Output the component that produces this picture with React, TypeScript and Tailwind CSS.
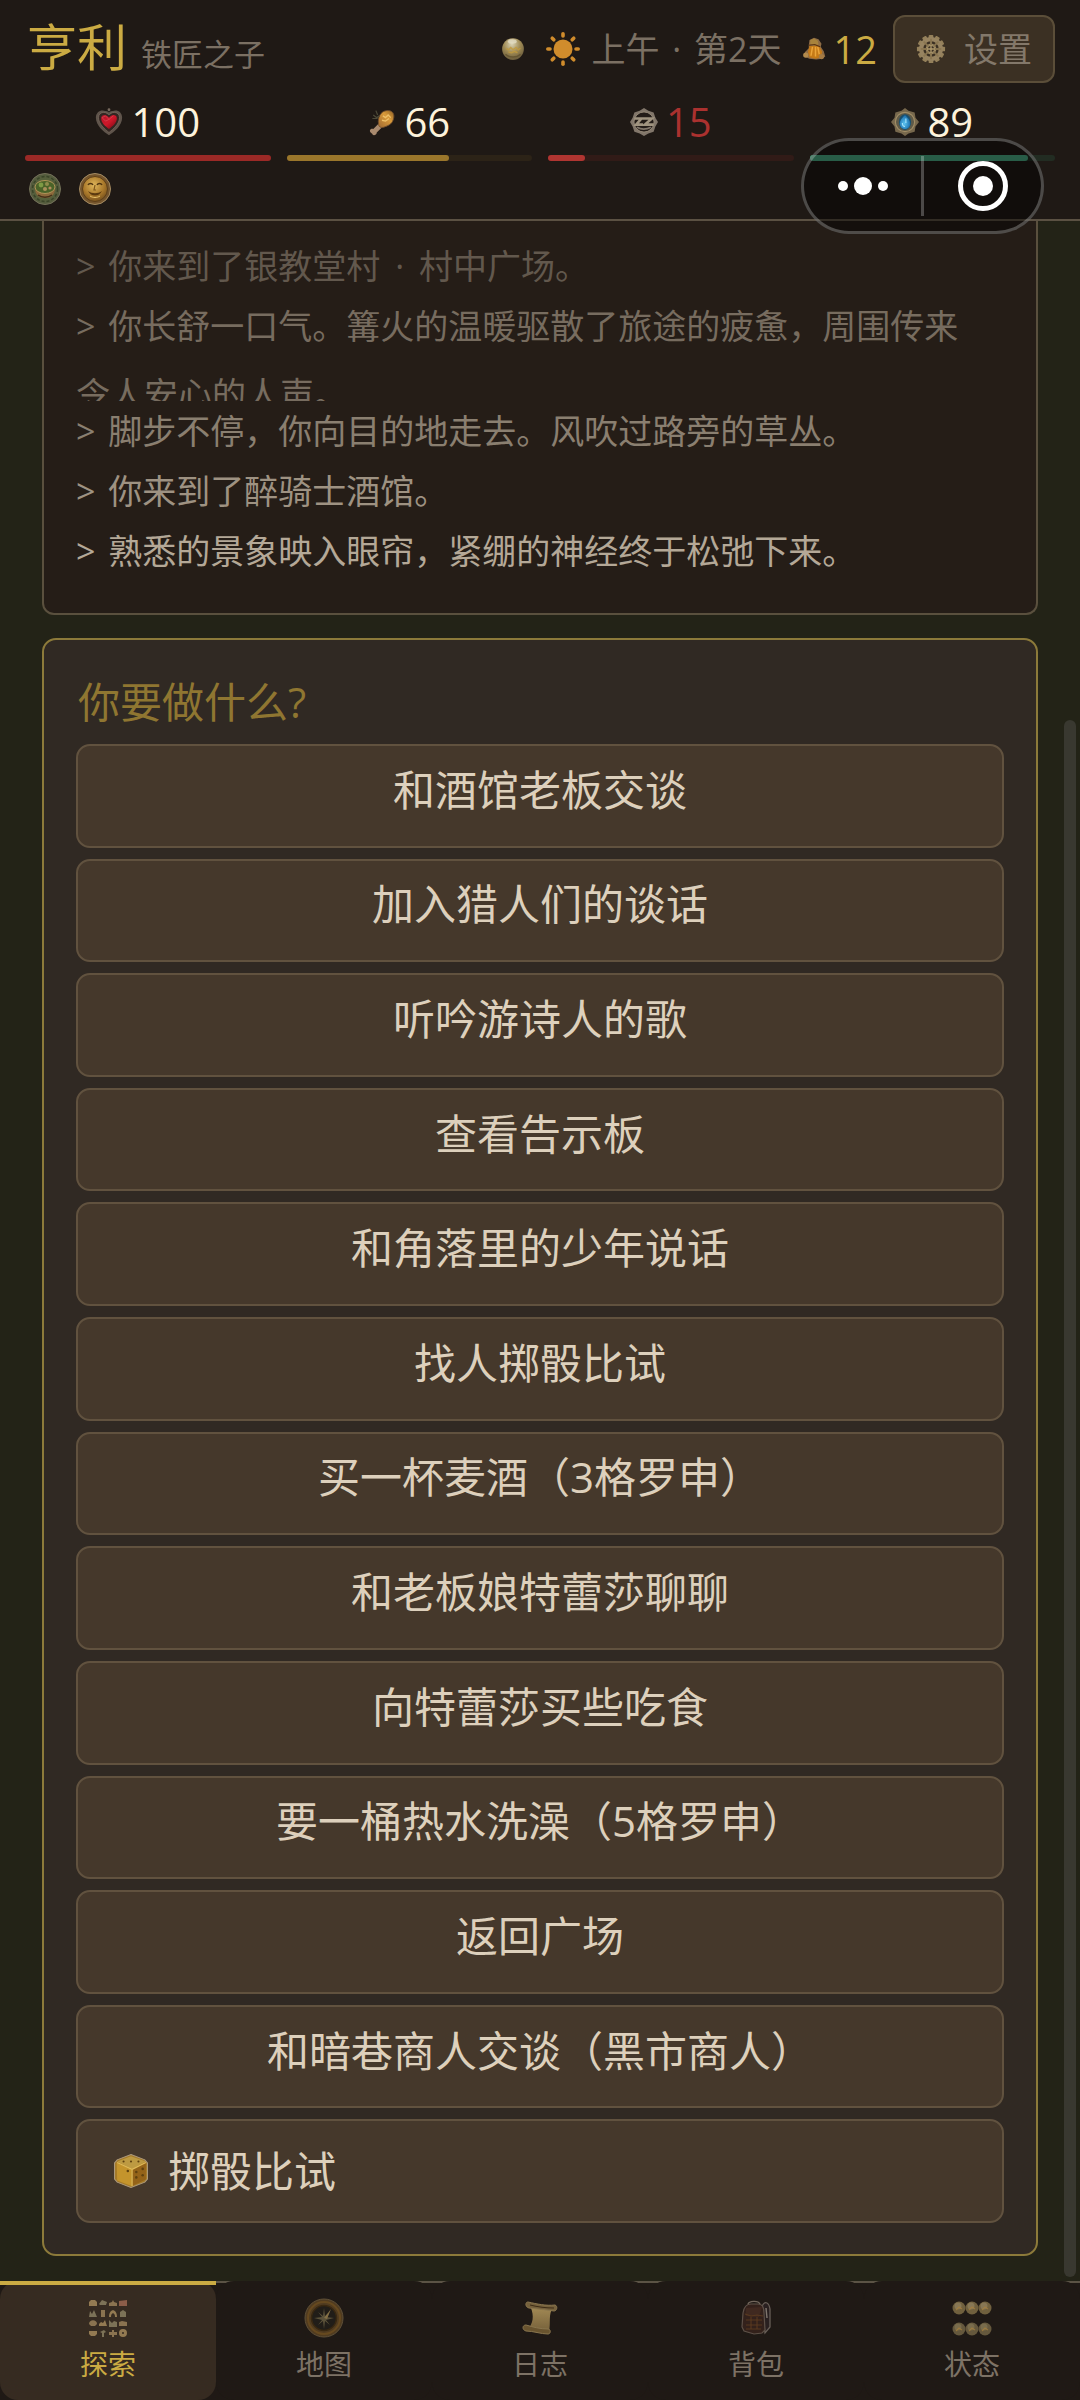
import type { ReactNode } from 'react';

type IconProps = { className?: string };

function Svg({ className = '', box = 32, children }: { className?: string; box?: number; children: ReactNode }) {
  return (
    <svg aria-hidden="true" viewBox={`0 0 ${box} ${box}`} className={`shrink-0 ${className}`}>
      {children}
    </svg>
  );
}

function Gradients() {
  return (
    <svg aria-hidden="true" className="absolute size-0">
      <defs>
        <radialGradient id="pearl" cx="45%" cy="28%" r="75%">
          <stop offset="0" stopColor="#d9d2b4" />
          <stop offset="0.5" stopColor="#a08b55" />
          <stop offset="1" stopColor="#66583a" />
        </radialGradient>
        <radialGradient id="coin" cx="45%" cy="35%" r="70%">
          <stop offset="0" stopColor="#dfb65a" />
          <stop offset="0.6" stopColor="#a9782a" />
          <stop offset="1" stopColor="#6f4b1c" />
        </radialGradient>
        <radialGradient id="moss" cx="50%" cy="50%" r="60%">
          <stop offset="0" stopColor="#5a6a35" />
          <stop offset="1" stopColor="#525740" />
        </radialGradient>
        <radialGradient id="water" cx="45%" cy="60%" r="60%">
          <stop offset="0" stopColor="#5cc4f2" />
          <stop offset="1" stopColor="#1769a8" />
        </radialGradient>
        <linearGradient id="ruby" x1="0" y1="0" x2="1" y2="1">
          <stop offset="0" stopColor="#b3152a" />
          <stop offset="0.5" stopColor="#d0182a" />
          <stop offset="1" stopColor="#6d0812" />
        </linearGradient>
        <linearGradient id="meat" x1="1" y1="0" x2="0" y2="1">
          <stop offset="0" stopColor="#8c5f24" />
          <stop offset="0.4" stopColor="#d99a3a" />
          <stop offset="1" stopColor="#a06a32" />
        </linearGradient>
        <linearGradient id="paper" x1="0" y1="0" x2="0" y2="1">
          <stop offset="0" stopColor="#a88f58" />
          <stop offset="1" stopColor="#75603a" />
        </linearGradient>
      </defs>
    </svg>
  );
}

const Orb = ({ className }: IconProps) => (
  <Svg className={className}>
    <circle cx="16" cy="16" r="14.5" fill="url(#pearl)" />
    <path d="M7 15l3 2 3-3 3 3 4-3 3 3 3-2M10 20l4 1 4-2 4 2" stroke="#c29a3c" strokeWidth="2" fill="none" opacity="0.8" />
    <path d="M6 23c5 5 15 5 20 0" stroke="#554627" strokeWidth="2" fill="none" opacity="0.6" />
    <ellipse cx="15" cy="6" rx="6" ry="3" fill="#e8e2cc" opacity="0.7" />
  </Svg>
);

const Sun = ({ className }: IconProps) => (
  <Svg className={className} box={36}>
    <circle cx="18" cy="18" r="9.5" fill="#d08c2c" />
    {[0, 45, 90, 135, 180, 225, 270, 315].map((a) => (
      <line key={a} x1="18" y1="2.8" x2="18" y2="5" stroke="#d08c2c" strokeWidth="3.6" strokeLinecap="round" transform={`rotate(${a} 18 18)`} />
    ))}
  </Svg>
);

const Purse = ({ className }: IconProps) => (
  <Svg className={className}>
    <path d="M10 4l6-3 6 2 4 6-1 4 4 6 2 7-4 3-8 1-9-1-7-3 1-6 5-5 0-4z" fill="#8d6b45" />
    <path d="M10 12h13l4 8-2 7-7 2-8-2-2-7z" fill="#c57a17" />
    <path d="M14 13l-2 12M18 13v13M21 13l2 10" stroke="#eba53a" strokeWidth="2" />
    <path d="M11 4l5-2 5 3 1 5-6 2-5-3z" fill="#a8833c" />
    <path d="M9 11l8-1 7 3" stroke="#5b3310" strokeWidth="1.6" fill="none" />
    <circle cx="5" cy="24" r="3.5" fill="#b38b4d" />
    <circle cx="26" cy="26" r="3.5" fill="#a57b44" />
  </Svg>
);

const Gear = ({ className }: IconProps) => (
  <Svg className={className}>
    {Array.from({ length: 12 }, (_, i) => (
      <rect key={i} x="13.5" y="1" width="5" height="6" rx="1" fill="#94805a" transform={`rotate(${i * 30} 16 16)`} />
    ))}
    <circle cx="16" cy="16" r="10.5" fill="none" stroke="#978360" strokeWidth="4.5" />
    <circle cx="16" cy="16" r="4.500" fill="none" stroke="#9c8862" strokeWidth="2.500" />
    {Array.from({ length: 8 }, (_, i) => (
      <line key={i} x1="16" y1="5" x2="16" y2="12" stroke="#8a7650" strokeWidth="2" transform={`rotate(${i * 45} 16 16)`} />
    ))}
    <path d="M16 12v8M12 16h8" stroke="#b09a6e" strokeWidth="1.4" />
  </Svg>
);

const Heart = ({ className }: IconProps) => (
  <Svg className={className}>
    <path d="M16 31C10 27 1 20 1 11c0-6 5-9 9-8 3 0 5 1 6 2 1-1 3-2 6-2 4-1 9 2 9 8 0 9-9 16-15 20z" fill="#5f544b" />
    <path d="M16 28C11 24 4 18 4 11c0-4 3-6 6-6s5 2 6 3c1-1 3-3 6-3s6 2 6 6c0 7-7 13-12 17z" fill="#332622" stroke="#7d6e62" strokeWidth="0.8" />
    <path d="M16 24C12 21 7 17 7 12c0-3 2-4 4-4s4 2 5 3c1-1 3-3 5-3s4 1 4 4c0 5-5 9-9 12z" fill="url(#ruby)" />
    <path d="M8 11l4-2 4 4-4 2zM16 13l5-4" stroke="#e2505a" strokeWidth="0.7" fill="none" />
    <circle cx="16" cy="2" r="1.6" fill="#776a5e" />
  </Svg>
);

const Drumstick = ({ className }: IconProps) => (
  <Svg className={className}>
    <path d="M14 16L6 24c-3-1-5 2-3 4 1 1 2 1 2 2 1 2 5 1 5-2l9-9z" fill="#a98a6e" />
    <path d="M12 18C11 11 14 4 21 3c7-1 10 4 8 10-2 6-6 7-11 9-4 1-6-1-6-4z" fill="url(#meat)" stroke="#6e4c2c" strokeWidth="1" />
    <path d="M17 9l3 2 3-3 3 3M16 14l4 1 4-3" stroke="#efc068" strokeWidth="1.5" fill="none" />
    <path d="M6 8l4 3 3-2M9 3l2 5M5 12l6 0" stroke="#4d4a38" strokeWidth="1.4" fill="none" />
  </Svg>
);

const Fatigue = ({ className }: IconProps) => (
  <Svg className={className}>
    <path d="M16 0l5 3 6 2 2 6 3 5-3 5-2 6-6 2-5 3-5-3-6-2-2-6-3-5 3-5 2-6 6-2z" fill="#81766a" />
    <circle cx="16" cy="16" r="11.500" fill="#231c18" stroke="#988b79" strokeWidth="1" />
    <path d="M5 12h8l-6 7h8M14 12h11l-8 7h10" stroke="#a09480" strokeWidth="3" fill="none" />
    <path d="M8 22c5 3 10 3 16 0" stroke="#81766a" strokeWidth="2" fill="none" />
  </Svg>
);

const WaterGem = ({ className }: IconProps) => (
  <Svg className={className}>
    <path d="M16 0l4 3 7 2 1 6 4 5-4 5-1 6-7 2-4 3-4-3-7-2-1-6-4-5 4-5 1-6 7-2z" fill="#77684d" />
    <circle cx="16" cy="16" r="11" fill="#5f5a48" stroke="#a18d66" strokeWidth="1.3" />
    <ellipse cx="16" cy="16" rx="7" ry="9" fill="#1a506e" />
    <path d="M16 8c3 3 6 6 6 10a6 6 0 0 1-12 0c0-4 3-7 6-10z" fill="url(#water)" />
    <path d="M13 17c0 3 1 4 3 4M17 12v5" stroke="#a2e2fa" strokeWidth="1.3" fill="none" />
  </Svg>
);

const FullBadge = ({ className }: IconProps) => (
  <Svg className={className}>
    <circle cx="16" cy="16" r="15.5" fill="url(#moss)" stroke="#747159" />
    <circle cx="16" cy="16" r="12.5" fill="none" stroke="#3a4428" strokeWidth="1.5" strokeDasharray="3 2" />
    <path d="M6 15c0 7 4 10 10 10s10-3 10-10z" fill="#8c693b" />
    <ellipse cx="16" cy="14" rx="10" ry="6.5" fill="#4a6328" stroke="#b09458" strokeWidth="1" />
    <circle cx="12" cy="12" r="2.4" fill="#7d9a45" />
    <circle cx="18" cy="11" r="2" fill="#8f8d4c" />
    <circle cx="16" cy="16" r="2" fill="#a8905a" />
    <circle cx="21" cy="15" r="1.6" fill="#b08d5c" />
    <path d="M9 22c4 3 10 3 14 0" stroke="#442f18" strokeWidth="1.5" fill="none" />
  </Svg>
);

const HappyBadge = ({ className }: IconProps) => (
  <Svg className={className}>
    <circle cx="16" cy="16" r="15.5" fill="#75552d" stroke="#a58c63" />
    <circle cx="16" cy="16" r="12.5" fill="url(#coin)" stroke="#5d3f18" />
    <path d="M9 12c1-2 4-2 5 0M18 12c1-2 4-2 5 0" stroke="#51350f" strokeWidth="1.5" fill="none" />
    <path d="M16 12l-1 5h2" stroke="#80581d" strokeWidth="1.2" fill="none" />
    <path d="M9 18c3 6 11 6 14 0-4 3-10 3-14 0z" fill="#5b3a10" />
    <path d="M11 23c3 2 7 2 10 0" stroke="#e6bf68" strokeWidth="1" fill="none" />
  </Svg>
);

const Dice = ({ className }: IconProps) => (
  <Svg className={className}>
    <path d="M16 .5l13 5 2.500 3v15l-2.500 3-13 5-13-5-2.500-3v-15l2.500-3z" fill="#a57a27" stroke="#ab987a" strokeWidth="1" />
    <path d="M16 2L3 7l14 7 13-7z" fill="#bd9a42" />
    <path d="M2.500 8l14 6.500v15.500L3 25z" fill="#c4942c" />
    <path d="M17 14.500L30 8v16l-13 6z" fill="#946319" />
    <path d="M3 8l14 6.500V30M17 14.500L30 8" stroke="#dfba58" strokeWidth="1.2" fill="none" />
    <g fill="#5f410f">
      <circle cx="16" cy="7" r="1" />
      <circle cx="9" cy="7" r="1" />
      <circle cx="23" cy="7" r="1" />
      <circle cx="13" cy="16" r="1.200" />
      <circle cx="21" cy="17" r="1.200" />
      <circle cx="21" cy="22" r="1.200" />
      <circle cx="27" cy="14" r="1.200" />
      <circle cx="27" cy="20" r="1.200" />
    </g>
  </Svg>
);

const exploreShapes = [
  'M1 7V3l2-2h4l2 2v4z', 'M1 5l3-4 5 2-1 3H2z', 'M1 7V4l3-1 1-2 1 2 3 1v3z', 'M1 2l8-1v6H1z',
  'M1 8l1-6 2 3 2-4 3 7z', 'M3 1h4v7H3z', 'M1 8c0-9 8-9 8 0H7c0-5-4-5-4 0z', 'M2 8V3l3-2 3 2v5z',
  'M1 5c0-5 8-5 8 0L7 7H3z', 'M1 7V5l2-2 2 1 2-3 2 6z', 'M1 1l3 3 2-2 3 1v5H1z', 'M1 7V3l3-1 5 1v4z',
  'M1 2h8v3L7 7H3L1 5z', 'M4 8V4L2 3l4-2 2 2-2 1v4z', 'M1 3h3V1h2v2h3v3H6v2H4V6H1z', 'M5 0a4 4 0 1 1 0 8 4 4 0 0 1 0-8zm0 3a1 1 0 1 0 0 2 1 1 0 0 0 0-2z',
];
const exploreTones = ['#937a52', '#7c7257', '#8a7350', '#8b5d49'];

const Explore = ({ className }: IconProps) => (
  <Svg className={className} box={40}>
    {exploreShapes.map((d, i) => (
      <path key={i} d={d} fill={i < 4 ? exploreTones[i] : exploreTones[i % 3]} fillRule="evenodd" transform={`translate(${(i % 4) * 10} ${Math.floor(i / 4) * 10 + 1})`} />
    ))}
  </Svg>
);

const Compass = ({ className }: IconProps) => (
  <Svg className={className} box={40}>
    <circle cx="20" cy="20" r="19" fill="#503b20" stroke="#5f5038" />
    <circle cx="20" cy="20" r="16" fill="none" stroke="#66491f" strokeWidth="2" />
    <circle cx="20" cy="20" r="12.500" fill="#211d18" stroke="#392811" strokeWidth="1.500" />
    <path d="M20 10l1 8 5-4-4 5 8 1-8 2 4 5-5-4-1 8-1-8-5 4 4-5-8-2 8-1-4-5 5 4z" fill="#5b523a" />
    <path d="M20 20l7-9-4 10z" fill="#857046" />
  </Svg>
);

const Scroll = ({ className }: IconProps) => (
  <Svg className={className} box={40}>
    <path d="M9 6c8 2 15 1 24 3-5 8-2 15-4 25-6-1-14-1-20-4 5-7 5-15 0-24z" fill="url(#paper)" />
    <path d="M8 4c-3 0-3 5 1 6 9 1 18 2 25 3 3 0 4-5 1-6-9 1-18-1-27-3z" fill="#75613c" stroke="#8a764e" strokeWidth="1" />
    <path d="M6 27c-4 0-4 5 0 6 7 0 15 3 22 3 3 0 3-5 0-5-8 0-15-2-22-4z" fill="#69542f" stroke="#8a764e" strokeWidth="1" />
    <path d="M10 7c8 2 16 3 24 3" stroke="#3d2c16" strokeWidth="1" fill="none" />
  </Svg>
);

const Backpack = ({ className }: IconProps) => (
  <Svg className={className} box={40}>
    <path d="M26 9c2-7 7-5 8 2v18l-5 6z" fill="#292020" stroke="#675e57" strokeWidth="1.300" />
    <path d="M7 15c1-7 4-9 8-9h7c5 0 6 4 6 9l1 17-3 3-8 1-10-3-2-4z" fill="#33211b" stroke="#5d5047" strokeWidth="1.200" />
    <path d="M12 6c1-3 10-4 12 0" stroke="#71665c" strokeWidth="1.400" fill="none" />
    <path d="M10 10l16-1-3 10-13-1z" fill="#402920" />
    <path d="M9 16l6 2 6-1 6 1M10 22h16M10 27h16M10 31h15M15 19v12M21 19v12" stroke="#59391f" strokeWidth="1.100" fill="none" />
    <path d="M30 10l1 10" stroke="#80766e" strokeWidth="1.400" />
  </Svg>
);

const StatusBeads = ({ className }: IconProps) => (
  <Svg className={className} box={40}>
    {[7, 20, 33].map((x) => (
      <g key={x}>
        <circle cx={x} cy="10" r="6.500" fill="#70603e" />
        <circle cx={x} cy="31" r="6.500" fill="#65583d" />
        <circle cx={x - 1} cy="8" r="3.500" fill="#91825f" opacity="0.7" />
        <circle cx={x - 1} cy="29" r="3.500" fill="#827552" opacity="0.7" />
        <path d={`M${x - 3} 12l3-3 3 2M${x - 3} 33l3-3 3 2`} stroke="#aa803a" strokeWidth="1.200" fill="none" opacity="0.7" />
      </g>
    ))}
  </Svg>
);

const stats = [
  { label: '生命', value: 100, Icon: Heart, text: 'text-[#fdf3dc]', fill: 'bg-[#9b2926]', track: 'bg-[#2e1c18]' },
  { label: '饱食', value: 66, Icon: Drumstick, text: 'text-[#fdf3dc]', fill: 'bg-[#9a762b]', track: 'bg-[#2c2317]' },
  { label: '精力', value: 15, Icon: Fatigue, text: 'text-[#ab312f]', fill: 'bg-[#b03531]', track: 'bg-[#311b17]' },
  { label: '水分', value: 89, Icon: WaterGem, text: 'text-[#fdf3dc]', fill: 'bg-[#4aa882]', track: 'bg-[#222c22]' },
];

const Dot = () => <span className="px-1.5"> · </span>;

const log: { id: string; text: ReactNode; row: string; line: string }[] = [
  { id: 'village', text: <>你来到了银教堂村<Dot />村中广场。</>, row: 'h-[60px] text-[#62584d]', line: 'leading-[60px]' },
  { id: 'campfire', text: '你长舒一口气。篝火的温暖驱散了旅途的疲惫，周围传来令人安心的人声。', row: 'h-[105px] text-[#776c5f]', line: '-mt-1 leading-[68px]' },
  { id: 'walk', text: '脚步不停，你向目的地走去。风吹过路旁的草丛。', row: 'h-[60px] text-[#8a7f70]', line: 'leading-[60px]' },
  { id: 'tavern', text: '你来到了醉骑士酒馆。', row: 'h-[60px] text-[#9e9282]', line: 'leading-[60px]' },
  { id: 'relief', text: '熟悉的景象映入眼帘，紧绷的神经终于松弛下来。', row: 'h-[60px] text-[#b4a897]', line: 'leading-[60px]' },
];

const choices = [
  '和酒馆老板交谈',
  '加入猎人们的谈话',
  '听吟游诗人的歌',
  '查看告示板',
  '和角落里的少年说话',
  '找人掷骰比试',
  '买一杯麦酒（3格罗申）',
  '和老板娘特蕾莎聊聊',
  '向特蕾莎买些吃食',
  '要一桶热水洗澡（5格罗申）',
  '返回广场',
  '和暗巷商人交谈（黑市商人）',
];

const tabs = [
  { label: '探索', Icon: Explore },
  { label: '地图', Icon: Compass },
  { label: '日志', Icon: Scroll },
  { label: '背包', Icon: Backpack },
  { label: '状态', Icon: StatusBeads },
];

function Header() {
  return (
    <header className="border-b-2 border-[#5b5143] bg-[#1f1915] px-[25px] pt-[15px] pb-[14px]">
      <div className="flex h-[68px] items-center justify-between whitespace-nowrap">
        <div className="flex items-baseline gap-[14px] pb-1 pl-0.5">
          <h1 className="text-[50px] leading-[60px] text-[#cbab43]">亨利</h1>
          <span className="text-[31px] text-[#7b7063]">铁匠之子</span>
        </div>
        <div className="flex items-center">
          <Orb className="mr-5 size-6" />
          <Sun className="mr-2.5 size-9" />
          <span className="text-[34px] text-[#7b7063]">
            上午<span className="px-1"> · </span>第2天
          </span>
          <Purse className="ml-5 size-6" />
          <span className="mr-4 ml-2 text-[38px] leading-[48px] text-[#cbab43]">12</span>
          <button type="button" className="flex h-[68px] items-center gap-[18px] rounded-xl border-2 border-[#5b4e39] bg-[#3b3023] px-[21px] text-[34px] text-[#83786a]">
            <Gear className="size-[30px]" />
            设置
          </button>
        </div>
      </div>

      <div className="mt-[15px] grid grid-cols-4 gap-4">
        {stats.map(({ label, value, Icon, text, fill, track }) => (
          <div key={label}>
            <div className="flex h-12 items-center justify-center gap-2">
              <Icon className="size-7" />
              <span className={`text-[40px] leading-[48px] ${text}`}>{value}</span>
            </div>
            <div role="meter" aria-label={label} aria-valuenow={value} aria-valuemin={0} aria-valuemax={100} className={`mt-[9px] h-1.5 rounded-full ${track}`}>
              <div className={`h-full rounded-full ${fill}`} style={{ width: `${value}%` }} />
            </div>
          </div>
        ))}
      </div>

      <div className="mt-3 flex gap-[18px] pl-1">
        <FullBadge className="size-8" />
        <HappyBadge className="size-8" />
      </div>
    </header>
  );
}

function Capsule() {
  return (
    <div className="absolute top-[138px] right-9 z-10 flex h-24 w-[243px] items-center rounded-full border-3 border-white/25 bg-black/45">
      <button type="button" aria-label="更多" className="flex h-full flex-1 items-center justify-center gap-1.5">
        <span className="size-2.5 rounded-full bg-white" />
        <span className="size-[18px] rounded-full bg-white" />
        <span className="size-2.5 rounded-full bg-white" />
      </button>
      <span className="h-[60px] w-[3px] bg-white/25" />
      <button type="button" aria-label="关闭" className="flex h-full flex-1 items-center justify-center">
        <span className="flex size-[50px] items-center justify-center rounded-full border-5 border-white">
          <span className="size-5 rounded-full bg-white" />
        </span>
      </button>
    </div>
  );
}

export default function App() {
  return (
    <div className="relative flex min-h-screen flex-col bg-[#232317] font-['Open_Sans','Noto_Sans_CJK_SC',sans-serif]">
      <Gradients />
      <Header />
      <Capsule />

      <main className="relative flex flex-1 flex-col gap-[23px] px-[42px] pb-[25px]">
        <section aria-label="记录" className="rounded-b-xl border-2 border-t-0 border-[#5a503e] bg-[#251d17] px-8 pt-[15px] pb-8">
          <ul>
            {log.map(({ id, text, row, line }) => (
              <li key={id} className={`overflow-hidden ${row}`}>
                <p className={`pr-4 text-[34px] ${line}`}>
                  <span className="mr-1">&gt;</span> {text}
                </p>
              </li>
            ))}
          </ul>
        </section>

        <section className="flex flex-1 flex-col rounded-[14px] border-2 border-[#8c7a3a] bg-[#302923] px-8 pt-8 pb-[31px]">
          <h2 className="pl-0.5 text-[42px] leading-[60px] text-[#8f7631]">你要做什么?</h2>
          <div className="mt-3 grid flex-1 auto-rows-fr gap-[11px]">
            {choices.map((choice) => (
              <button key={choice} type="button" className="rounded-[14px] border-2 border-[#61523f] bg-[#45382b] pb-3 text-[42px] leading-[60px] text-[#ddd0bc]">
                {choice}
              </button>
            ))}
            <button type="button" className="flex items-center gap-5 rounded-[14px] border-2 border-[#61523f] bg-[#45382b] px-9 text-[42px] leading-[60px] text-[#ddd0bc]">
              <Dice className="size-[34px]" />
              掷骰比试
            </button>
          </div>
        </section>

        <div className="absolute top-[499px] right-1 bottom-1 w-3 rounded-full bg-[#393830]" />
      </main>

      <nav className="grid grid-cols-5 border-t-2 border-[#5b5345] bg-[#1f1915]">
        {tabs.map(({ label, Icon }, i) => (
          <button
            key={label}
            type="button"
            aria-current={i === 0 ? 'page' : undefined}
            className={`relative -mt-0.5 flex flex-col items-center gap-2.5 rounded-[18px] pt-[17px] pb-5 text-[28px] leading-8 ${i === 0 ? 'bg-[#362b21] text-[#cbab43]' : 'bg-[#1f1915] text-[#7d7265]'}`}
          >
            {i === 0 && <span className="absolute inset-x-0 top-0 h-1 bg-[#cbab43]" />}
            <Icon className="size-10" />
            {label}
          </button>
        ))}
      </nav>
    </div>
  );
}
